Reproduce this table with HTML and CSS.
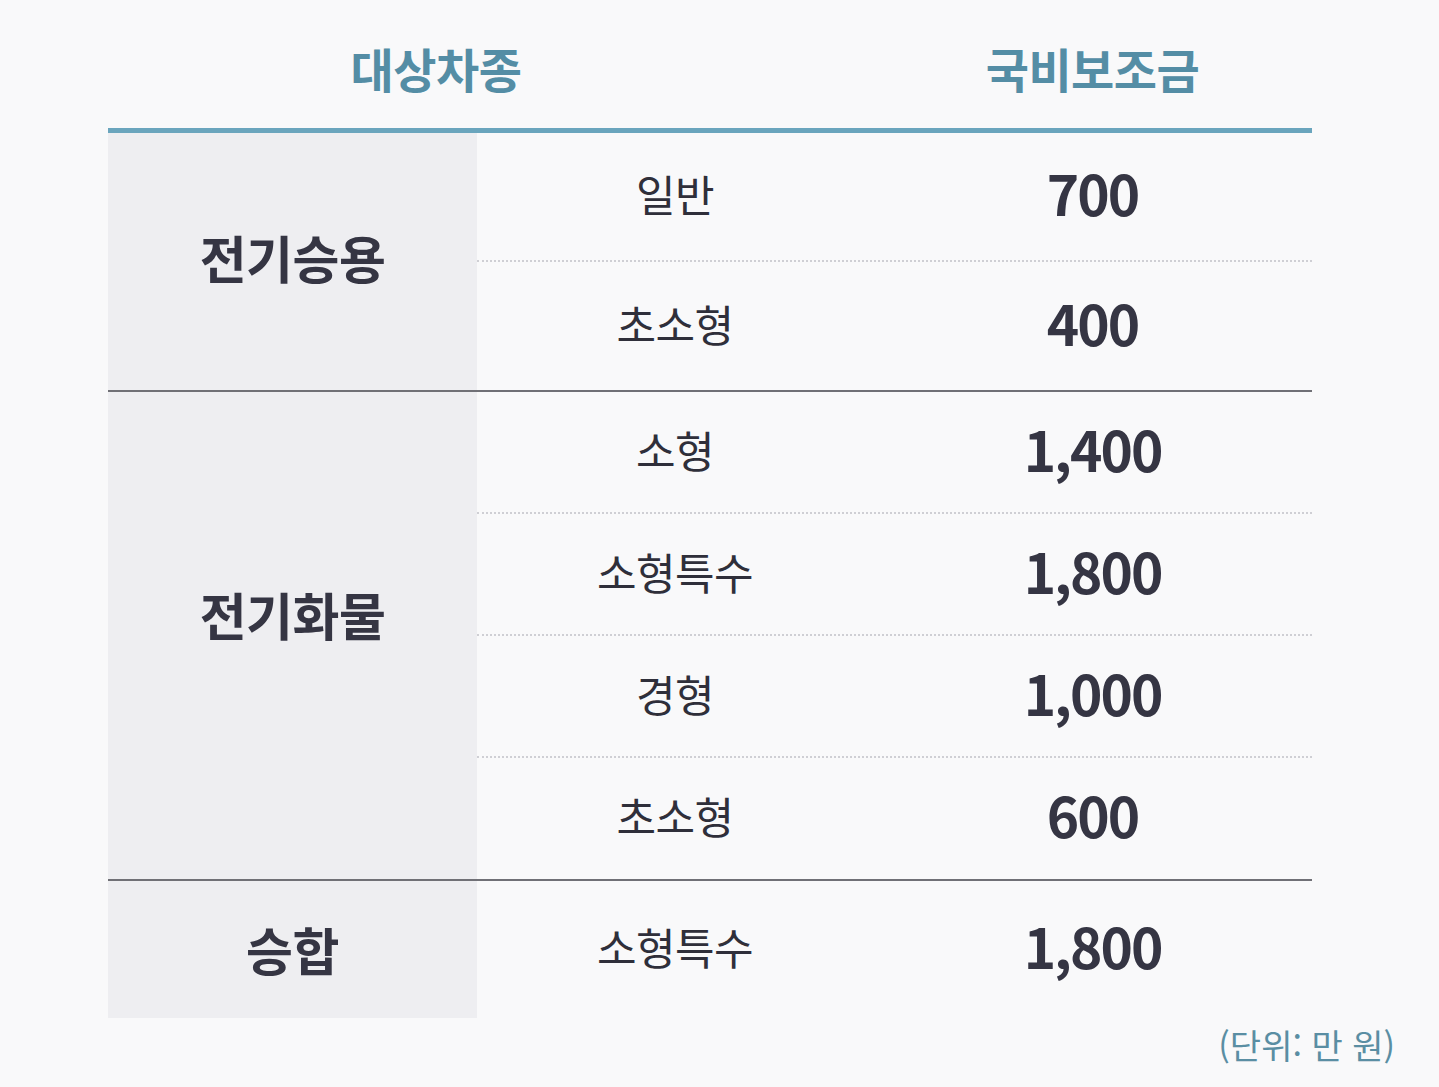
FILE: index.html
```html
<!DOCTYPE html>
<html lang="ko">
<head>
<meta charset="utf-8">
<title>전기차 국비보조금</title>
<link rel="stylesheet" href="styles.css">
</head>
<body>
<div class="page">
  <div class="table">
    <div class="head">
      <div class="h h1">대상차종</div>
      <div class="h h2">국비보조금</div>
    </div>
    <div class="group g1">
      <div class="label">전기승용</div>
      <div class="rows">
        <div class="row"><div class="sub">일반</div><div class="val">700</div></div>
        <div class="row"><div class="sub">초소형</div><div class="val">400</div></div>
      </div>
    </div>
    <div class="group g2">
      <div class="label">전기화물</div>
      <div class="rows">
        <div class="row"><div class="sub">소형</div><div class="val">1,400</div></div>
        <div class="row"><div class="sub">소형특수</div><div class="val">1,800</div></div>
        <div class="row"><div class="sub">경형</div><div class="val">1,000</div></div>
        <div class="row"><div class="sub">초소형</div><div class="val">600</div></div>
      </div>
    </div>
    <div class="group g3">
      <div class="label">승합</div>
      <div class="rows">
        <div class="row"><div class="sub">소형특수</div><div class="val">1,800</div></div>
      </div>
    </div>
  </div>
  <div class="note">(단위: 만 원)</div>
</div>
</body>
</html>
```
FILE: styles.css
```css
html, body {
  margin: 0;
  padding: 0;
  background: #f9f9fa;
}
body {
  font-family: "Noto Sans CJK KR", "Noto Sans", sans-serif;
  color: #33333f;
}
.page {
  width: 1439px;
  height: 1087px;
  box-sizing: border-box;
  padding-left: 108px;
  padding-right: 44px;
}
.table {
  width: 1204px;
}
.head {
  display: grid;
  grid-template-columns: 656px 109px 439px;
  height: 128px;
  align-items: center;
  border-bottom: 5px solid #6aa5bd;
}
.h {
  text-align: center;
  font-size: 47px;
  line-height: 1;
  font-weight: 700;
  color: #548da5;
  padding-top: 6px;
  letter-spacing: -0.5px;
}
.h2 { grid-column: 3; }
.group {
  display: flex;
}
.group + .group {
  border-top: 2px solid #707076;
}
.label {
  width: 369px;
  flex: none;
  background: #eeeef1;
  display: flex;
  align-items: center;
  justify-content: center;
  font-size: 51px;
  line-height: 1;
  font-weight: 700;
  color: #353543;
  letter-spacing: -0.5px;
  padding-bottom: 8px;
  box-sizing: border-box;
}
.g2 .label {
  padding-bottom: 42px;
}
.g3 .label {
  padding-bottom: 0;
}
.rows {
  flex: 1;
  display: flex;
  flex-direction: column;
}
.row {
  display: grid;
  grid-template-columns: 396px 439px;
  align-items: center;
  border-bottom: 2px dotted #cfcfd4;
}
.row:last-child {
  border-bottom: none;
}
.g1 .row { height: 127px; }
.g1 .row:last-child { height: 128px; }
.g2 .row { height: 120px; }
.g2 .row:last-child { height: 121px; }
.g3 .row { height: 137px; }
.sub {
  text-align: center;
  font-size: 43px;
  line-height: 1;
  font-weight: 400;
  color: #2f2f3a;
  letter-spacing: -0.5px;
  padding-bottom: 6px;
}
.val {
  text-align: center;
  font-size: 55px;
  line-height: 1;
  font-weight: 700;
  color: #353543;
  letter-spacing: -2px;
  padding-bottom: 8px;
}
.note {
  text-align: right;
  font-size: 34px;
  color: #5a8ea3;
  margin-top: 2px;
}
```
